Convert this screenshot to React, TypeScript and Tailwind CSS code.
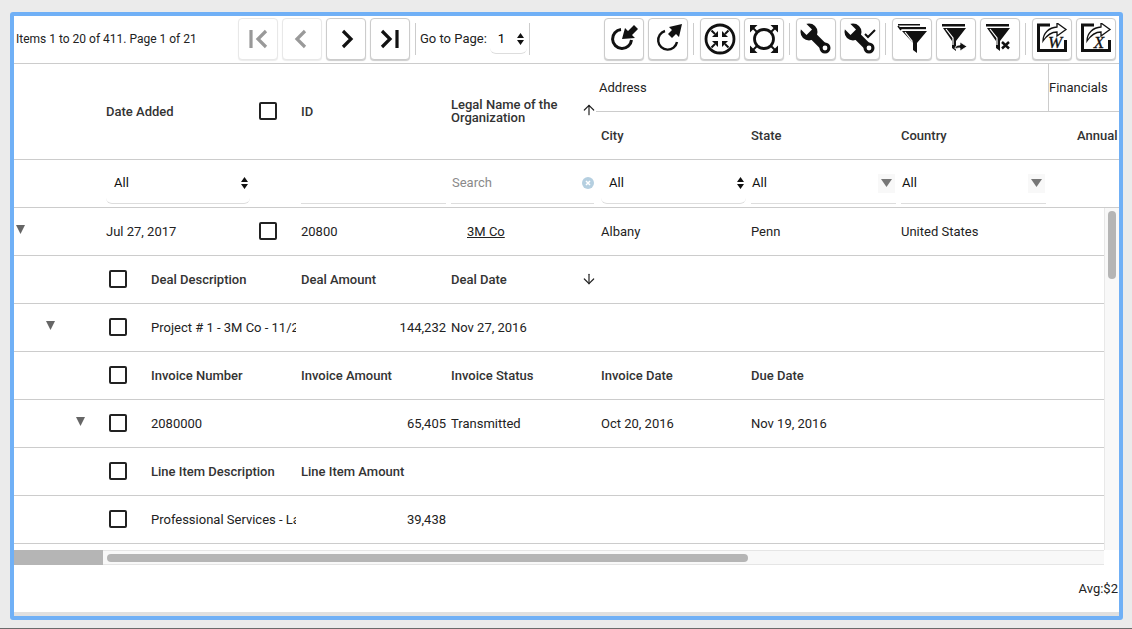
import React from "react";
import { ArrowDown, ArrowUp } from "lucide-react";

const font = { fontFamily: "Roboto, 'Liberation Sans', sans-serif" };

const Checkbox = () => (
  <div className="mb-[2px] h-[18px] w-[18px] shrink-0 rounded-[2px] border-2 border-[#222]" />
);

const Expander = ({ className }: { className: string }) => (
  <svg width="9" height="9" viewBox="0 0 9 9" className={className}>
    <path d="M0 0h9L4.500 9z" fill="#666" />
  </svg>
);

const SortArrows = () => (
  <svg width="7" height="12" viewBox="0 0 7 12" className="shrink-0">
    <path d="M3.500 0L7 5H0zM3.500 12L0 7h7z" fill="#111" />
  </svg>
);

const Sep = ({ className = "" }: { className?: string }) => (
  <div className={`h-[32px] w-px shrink-0 bg-[#ccc] ${className}`} />
);

const ToolBtn = ({
  children,
  disabled,
}: {
  children: React.ReactNode;
  disabled?: boolean;
}) => (
  <button
    className={
      disabled
        ? "flex h-[42px] w-[40px] shrink-0 items-center justify-center rounded-[4px] border border-[#e8e8e8] bg-white shadow-[0_1px_1px_rgba(0,0,0,0.08)]"
        : "flex h-[42px] w-[40px] shrink-0 items-center justify-center rounded-[4px] border border-[#ccc] bg-white shadow-[0_1px_1px_rgba(0,0,0,0.2)]"
    }
  >
    {children}
  </button>
);

const Nav = ({ d, color, bar }: { d: string; color: string; bar?: number }) => (
  <svg width="28" height="28" viewBox="0 0 28 28" fill="none" stroke={color} strokeWidth="3.200">
    <path d={d} />
    {bar ? <path d={`M${bar} 5v18`} /> : null}
  </svg>
);

const Icon = ({ children }: { children: React.ReactNode }) => (
  <svg width="32" height="32" viewBox="0 0 32 32">
    {children}
  </svg>
);

const ResetIn = () => (
  <Icon>
    <path d="M13 6.500A9.500 9.500 0 1 0 23.500 17" fill="none" stroke="#111" strokeWidth="3" />
    <path d="M14 16l3-11 3 3 6-6 4 4-6 6 3 3z" fill="#111" />
  </Icon>
);

const ResetOut = () => (
  <Icon>
    <path d="M13 8A9.500 9.500 0 1 0 25 19" fill="none" stroke="#111" strokeWidth="2.400" />
    <path d="M30 1l-3 13-3-3-4 4-4-4 4-4-3-3z" fill="#111" />
  </Icon>
);

const CornerArrow = ({ rotate, out }: { rotate: number; out?: boolean }) => (
  <g transform={`rotate(${rotate} 16 16)`}>
    {out ? (
      <>
        <path d="M2 2h7.500L2 9.500z" fill="#111" />
        <path d="M5 5l4 4" stroke="#111" strokeWidth="2" />
      </>
    ) : (
      <>
        <path d="M14 14H8l6-6z" fill="#111" />
        <path d="M11 11L7.500 7.500" stroke="#111" strokeWidth="2" />
      </>
    )}
  </g>
);

const CollapseAll = () => (
  <Icon>
    <circle cx="16" cy="16" r="14" fill="none" stroke="#111" strokeWidth="2.800" />
    {[0, 90, 180, 270].map((r) => (
      <CornerArrow key={r} rotate={r} />
    ))}
  </Icon>
);

const ExpandAll = () => (
  <Icon>
    <circle cx="16" cy="16" r="9.500" fill="none" stroke="#111" strokeWidth="2.800" />
    {[0, 90, 180, 270].map((r) => (
      <CornerArrow key={r} rotate={r} out />
    ))}
  </Icon>
);

const Wrench = ({ check }: { check?: boolean }) => (
  <Icon>
    <path d="M9 9l16 16" stroke="#111" strokeWidth="7.500" />
    <circle cx="9" cy="9" r="8.500" fill="#111" />
    <path d="M-2 3.500L3.500 -2 12 6.500 6.500 12z" fill="#fff" />
    <circle cx="25" cy="25" r="5.500" fill="#111" />
    <circle cx="25" cy="25" r="2.400" fill="#fff" />
    {check ? <path d="M21 11l3 3 7-7" fill="none" stroke="#111" strokeWidth="2" /> : null}
  </Icon>
);

const Funnel = ({ children }: { children?: React.ReactNode }) => (
  <Icon>
    <path d="M2 1h23v2.500H2z" fill="#111" />
    <path d="M3 5h23L16 18v10l-4-3v-7z" fill="#111" />
    <path d="M6 6l7 9v7" fill="none" stroke="#fff" strokeWidth="1.200" />
    {children}
  </Icon>
);

const FilterStack = () => (
  <Icon>
    <path d="M2 1h22v1.500H2z" fill="#111" />
    <path d="M2 3l3 4" fill="none" stroke="#111" strokeWidth="1.500" />
    <path d="M4 4h26v2.200H4z" fill="#111" />
    <path d="M6 8h25L21 20v10l-4-3v-7z" fill="#111" />
    <path d="M9 9l7 9v6" fill="none" stroke="#fff" strokeWidth="1.200" />
  </Icon>
);

const Export = ({ letter }: { letter: string }) => (
  <Icon>
    <path d="M14 2H2.500v25.500h27V17" fill="none" stroke="#111" strokeWidth="3" />
    <path d="M7 18C7 10 13 4.500 21 4V0l9 6.500-9 6.500V9C15 9 11 12 7 18z" fill="#fff" stroke="#111" strokeWidth="1.300" />
    <text
      x="19"
      y="25"
      textAnchor="middle"
      fontSize="17"
      fontStyle="italic"
      fontFamily="'Liberation Serif', serif"
      fill="#111"
      stroke="#111"
      strokeWidth="0.300"
    >
      {letter}
    </text>
  </Icon>
);

const Toolbar = () => (
  <div className="flex h-[48px] items-center border-b border-[#ccc] pb-[1px]">
    <span className="w-[224px] shrink-0 pl-[2px] text-[12px] text-[#222]">Items 1 to 20 of 411. Page 1 of 21</span>
    <div className="flex gap-[4px]">
      <ToolBtn disabled>
        <Nav d="M22 6l-8 8 8 8" color="#999" bar={7} />
      </ToolBtn>
      <ToolBtn disabled>
        <Nav d="M17 6l-8 8 8 8" color="#999" />
      </ToolBtn>
      <ToolBtn>
        <Nav d="M11 6l8 8-8 8" color="#111" />
      </ToolBtn>
      <ToolBtn>
        <Nav d="M6 6l8 8-8 8" color="#111" bar={21} />
      </ToolBtn>
    </div>
    <Sep className="ml-[5px]" />
    <span className="ml-[4px] whitespace-nowrap text-[#222]">Go to Page:</span>
    <div className="ml-[3px] flex h-[30px] w-[37px] shrink-0 items-center justify-between rounded-b-[6px] border-b border-[#ddd] pl-[8px] pr-[3px]">
      <span>1</span>
      <SortArrows />
    </div>
    <Sep className="ml-[2px]" />
    <div className="ml-[74px] flex items-center gap-[4px]">
      <ToolBtn>
        <ResetIn />
      </ToolBtn>
      <ToolBtn>
        <ResetOut />
      </ToolBtn>
      <Sep className="ml-[1px] mr-[2px]" />
      <ToolBtn>
        <CollapseAll />
      </ToolBtn>
      <ToolBtn>
        <ExpandAll />
      </ToolBtn>
      <Sep className="ml-[1px] mr-[2px]" />
      <ToolBtn>
        <Wrench />
      </ToolBtn>
      <ToolBtn>
        <Wrench check />
      </ToolBtn>
      <Sep className="ml-[1px] mr-[2px]" />
      <ToolBtn>
        <FilterStack />
      </ToolBtn>
      <ToolBtn>
        <Funnel>
          <path d="M15 26c0-3 2-4 5-4v-3l7 4.500-7 4.500v-3c-2 0-3 0-5 1z" fill="#111" stroke="#fff" strokeWidth="0.800" />
        </Funnel>
      </ToolBtn>
      <ToolBtn>
        <Funnel>
          <path d="M18 19l7 6.500M25 19l-7 6.500" stroke="#111" strokeWidth="2.500" />
        </Funnel>
      </ToolBtn>
      <Sep className="ml-[1px] mr-[2px]" />
      <ToolBtn>
        <Export letter="W" />
      </ToolBtn>
      <ToolBtn>
        <Export letter="X" />
      </ToolBtn>
    </div>
  </div>
);

const HeaderRow = () => (
  <div className="flex h-[96px] border-b border-[#ccc] font-medium text-[#333]">
    <div className="flex w-[92px] shrink-0" />
    <div className="flex w-[150px] shrink-0 items-center">Date Added</div>
    <div className="flex w-[45px] shrink-0 items-center pl-[3px]">
      <Checkbox />
    </div>
    <div className="flex w-[150px] shrink-0 items-center">ID</div>
    <div className="flex w-[145px] shrink-0 items-center justify-between">
      <span className="mb-[1px] leading-[13px]">
        Legal Name of the
        <br />
        Organization
      </span>
      <ArrowUp size={16} strokeWidth={1.800} className="-mr-[1px] mb-[3px] text-[#222]" />
    </div>
    <div className="flex flex-1 flex-col overflow-hidden">
      <div className="flex h-[48px] shrink-0 border-b border-[#ccc] font-normal text-[#222]">
        <div className="flex w-[452px] shrink-0 items-center pl-[3px]">Address</div>
        <div className="flex flex-1 items-center border-l border-[#ccc]">Financials</div>
      </div>
      <div className="flex flex-1 items-center pl-[5px]">
        <div className="w-[150px] shrink-0">City</div>
        <div className="w-[150px] shrink-0">State</div>
        <div className="w-[150px] shrink-0">Country</div>
        <div className="flex-1 pl-[26px]">Annual</div>
      </div>
    </div>
  </div>
);

const SelectFilter = ({ className }: { className: string }) => (
  <div className={`flex h-[44px] shrink-0 items-center justify-between rounded-b-[6px] border-b border-[#ddd] pl-[8px] pr-[2px] pt-[2px] ${className}`}>
    <span className="text-[#111]">All</span>
    <SortArrows />
  </div>
);

const ComboFilter = () => (
  <div className="flex h-[44px] w-[145px] shrink-0 items-center justify-between border-b border-[#ddd] pl-[1px] pr-[1px] pt-[2px]">
    <span className="text-[#111]">All</span>
    <div className="mt-[1px] flex h-[19px] w-[17px] items-center justify-center bg-[#f8f8f8]">
      <svg width="11" height="8" viewBox="0 0 11 8">
        <path d="M0 0h11L5.500 8z" fill="#777" />
      </svg>
    </div>
  </div>
);

const FilterRow = () => (
  <div className="flex h-[48px] border-b border-[#ccc] pl-[92px]">
    <SelectFilter className="w-[144px]" />
    <div className="ml-[51px] h-[44px] w-[145px] shrink-0 border-b border-[#ddd]" />
    <div className="ml-[5px] flex h-[44px] w-[143px] shrink-0 items-center justify-between border-b border-[#ddd] pl-[1px] pt-[2px]">
      <span className="text-[#8a8a8a]">Search</span>
      <svg width="12" height="12" viewBox="0 0 12 12">
        <circle cx="6" cy="6" r="6" fill="#b5cfe0" />
        <path d="M4 4l4 4M8 4l-4 4" stroke="#fff" strokeWidth="1.500" />
      </svg>
    </div>
    <SelectFilter className="ml-[7px] w-[145px]" />
    <div className="ml-[5px]">
      <ComboFilter />
    </div>
    <div className="ml-[5px]">
      <ComboFilter />
    </div>
  </div>
);

const Row = ({ children }: { children: React.ReactNode }) => (
  <div className="flex h-[48px] shrink-0 items-center border-b border-[#ccc] text-[#222]">{children}</div>
);

const HeadRow = ({ cols }: { cols: string[] }) => (
  <Row>
    <div className="w-[92px] shrink-0" />
    <div className="w-[45px] shrink-0 pl-[3px]">
      <Checkbox />
    </div>
    {cols.map((c) => (
      <div key={c} className="w-[150px] shrink-0 whitespace-nowrap font-medium text-[#333]">
        {c}
      </div>
    ))}
  </Row>
);

const Spacer = () => <div className="w-[5px] shrink-0" />;

const Body = () => (
  <div className="flex h-[342px]">
    <div className="flex min-w-0 flex-1 flex-col overflow-hidden">
      <Row>
        <div className="flex w-[92px] shrink-0 items-center pl-[2px]">
          <Expander className="mb-[4px]" />
        </div>
        <div className="w-[150px] shrink-0">Jul 27, 2017</div>
        <div className="w-[45px] shrink-0 pl-[3px]">
          <Checkbox />
        </div>
        <div className="w-[150px] shrink-0">20800</div>
        <div className="w-[150px] shrink-0 pl-[16px] underline">3M Co</div>
        <div className="w-[150px] shrink-0">Albany</div>
        <div className="w-[150px] shrink-0">Penn</div>
        <div className="w-[150px] shrink-0">United States</div>
      </Row>
      <Row>
        <div className="w-[92px] shrink-0" />
        <div className="w-[45px] shrink-0 pl-[3px]">
          <Checkbox />
        </div>
        <div className="w-[150px] shrink-0 font-medium text-[#333]">Deal Description</div>
        <div className="w-[150px] shrink-0 font-medium text-[#333]">Deal Amount</div>
        <div className="flex w-[145px] shrink-0 items-center justify-between font-medium text-[#333]">
          Deal Date
          <ArrowDown size={16} strokeWidth={1.800} className="-mr-[1px] mb-[2px] text-[#222]" />
        </div>
      </Row>
      <Row>
        <div className="flex w-[92px] shrink-0 items-center pl-[32px]">
          <Expander className="mb-[4px]" />
        </div>
        <div className="w-[45px] shrink-0 pl-[3px]">
          <Checkbox />
        </div>
        <div className="w-[145px] shrink-0 overflow-hidden whitespace-nowrap">Project # 1 - 3M Co - 11/27/2016</div>
        <Spacer />
        <div className="w-[145px] shrink-0 text-right">144,232</div>
        <Spacer />
        <div className="w-[150px] shrink-0">Nov 27, 2016</div>
      </Row>
      <HeadRow cols={["Invoice Number", "Invoice Amount", "Invoice Status", "Invoice Date", "Due Date"]} />
      <Row>
        <div className="flex w-[92px] shrink-0 items-center pl-[62px]">
          <Expander className="mb-[4px]" />
        </div>
        <div className="w-[45px] shrink-0 pl-[3px]">
          <Checkbox />
        </div>
        <div className="w-[150px] shrink-0">2080000</div>
        <div className="w-[145px] shrink-0 text-right">65,405</div>
        <Spacer />
        <div className="w-[150px] shrink-0">Transmitted</div>
        <div className="w-[150px] shrink-0">Oct 20, 2016</div>
        <div className="w-[150px] shrink-0">Nov 19, 2016</div>
      </Row>
      <HeadRow cols={["Line Item Description", "Line Item Amount"]} />
      <Row>
        <div className="w-[92px] shrink-0" />
        <div className="w-[45px] shrink-0 pl-[3px]">
          <Checkbox />
        </div>
        <div className="w-[145px] shrink-0 overflow-hidden whitespace-nowrap">Professional Services - Labor</div>
        <Spacer />
        <div className="w-[145px] shrink-0 text-right">39,438</div>
      </Row>
    </div>
    <div className="w-[15px] shrink-0 border-l border-[#e8e8e8] bg-[#f8f8f8] pl-[3px] pt-[3px]">
      <div className="h-[68px] w-[8px] rounded-[4px] bg-[#b5b5b5]" />
    </div>
  </div>
);

const Scroller = () => (
  <div className="flex h-[15px] w-[1090px] shrink-0">
    <div className="w-[89px] shrink-0 bg-[#b5b5b5]" />
    <div className="flex-1 border-y border-[#e5e5e5] bg-[#f8f8f8] pl-[4px] pt-[3px]">
      <div className="h-[8px] w-[641px] rounded-[4px] bg-[#b5b5b5]" />
    </div>
  </div>
);

export default function App() {
  return (
    <div className="flex h-[629px] w-[1132px] flex-col overflow-hidden bg-[#ebebeb] pt-[12px] text-[13px]" style={font}>
      <div className="ml-[10px] flex h-[608px] w-[1113px] flex-col rounded-[3px] border-4 border-[#70b0f6] bg-white">
        <Toolbar />
        <HeaderRow />
        <FilterRow />
        <Body />
        <Scroller />
        <div className="flex flex-1 items-center justify-end border-b-4 border-[#e0e0e0] pr-[1px] text-[#222]">
          Avg:$2
        </div>
      </div>
      <div className="mt-auto h-px w-full bg-[#6b6b6b]" />
    </div>
  );
}
